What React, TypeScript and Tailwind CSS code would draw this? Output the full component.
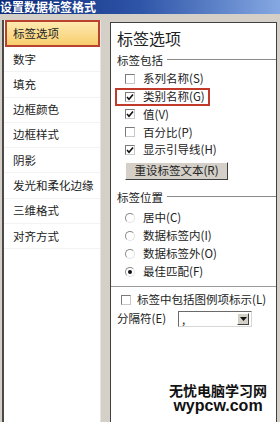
import React from "react";

const cjk = { fontFamily: '"Noto Sans CJK SC", "Noto Sans", sans-serif' };

function CheckBox({ checked }: { checked?: boolean }) {
  return (
    <div className="w-[10px] h-[10px] border border-t-[#7a7a7a] border-l-[#7a7a7a] border-r-[#c8c8c8] border-b-[#c8c8c8] bg-white flex items-center justify-center shrink-0">
      {checked && (
        <svg width="8" height="8" viewBox="0 0 8 8">
          <polyline points="1,4 3,6.2 7,1.6" fill="none" stroke="#111" strokeWidth="1.6" />
        </svg>
      )}
    </div>
  );
}

function Radio({ checked }: { checked?: boolean }) {
  return (
    <div className="w-[10px] h-[10px] rounded-full border border-t-[#8a8a8a] border-l-[#8a8a8a] border-r-[#e2e2e2] border-b-[#e2e2e2] bg-white flex items-center justify-center shrink-0">
      {checked && <div className="w-[4px] h-[4px] rounded-full bg-[#111]" />}
    </div>
  );
}

function GroupTitle({ label }: { label: string }) {
  return (
    <div className="flex items-center h-[14px] pl-[6px] gap-[4px]">
      <span className="text-[11.5px] leading-[14px] text-[#222]">{label}</span>
      <div className="flex-1 h-[2px] border-t border-[#8a8a8a] border-b border-b-white" />
    </div>
  );
}

const menu = ["数字", "填充", "边框颜色", "边框样式", "阴影", "发光和柔化边缘", "三维格式", "对齐方式"];

export default function App() {
  return (
    <div className="w-[280px] h-[422px] overflow-hidden bg-[#d4d0c8] flex flex-col" style={cjk}>
      <div className="h-[14px] shrink-0 flex items-center bg-gradient-to-r from-[#0c2a78] via-[#2f55a8] to-[#86a8e2]">
        <div className="text-[12px] leading-[14px] font-bold text-white whitespace-nowrap">
          设置数据标签格式
        </div>
      </div>

      <div className="flex flex-1 pt-[6px]">
        <div className="ml-[2px] w-[99px] bg-white border-l-2 border-[#4a4a4a] border-r border-r-[#e4e4e4]">
          <div className="ml-[1px] w-[95px] h-[27px] border-2 border-[#b9412e] bg-gradient-to-b from-[#fdeab0] to-[#f8cd6c] flex items-center pl-[6px] text-[11.5px] text-[#222]">
            标签选项
          </div>
          {menu.map((m) => (
            <div
              key={m}
              className="h-[25.3px] flex items-center pl-[9px] text-[11.5px] text-[#222] border-b border-[#f3f3f3] whitespace-nowrap"
            >
              {m}
            </div>
          ))}
        </div>

        <div className="ml-[9px] mt-[2px] w-[167px] bg-white border-l border-r border-t border-[#404040] flex flex-col">
          <div className="mt-[5px] h-[20px] pl-[6px] text-[16px] leading-[20px] text-[#222]">标签选项</div>

          <div className="mt-[5px]">
            <GroupTitle label="标签包括" />
          </div>

          <div className="mt-[3px] flex flex-col text-[11.5px] text-[#222]">
            <div className="h-[17.75px] flex items-center pl-[14px] gap-[8px]">
              <CheckBox />
              <span>系列名称(S)</span>
            </div>
            <div className="h-[17.75px] w-[95px] ml-[4px] border-2 border-[#c0392b] flex items-center pl-[8px] gap-[8px]">
              <CheckBox checked />
              <span>类别名称(G)</span>
            </div>
            <div className="h-[17.75px] flex items-center pl-[14px] gap-[8px]">
              <CheckBox checked />
              <span>值(V)</span>
            </div>
            <div className="h-[17.75px] flex items-center pl-[14px] gap-[8px]">
              <CheckBox />
              <span>百分比(P)</span>
            </div>
            <div className="h-[17.75px] flex items-center pl-[14px] gap-[8px]">
              <CheckBox checked />
              <span>显示引导线(H)</span>
            </div>
          </div>

          <div className="mt-[3px] ml-[14px] w-[103px] h-[18px] bg-[#d4d0c8] border border-t-white border-l-white border-r-[#404040] border-b-[#404040] flex items-center justify-center text-[11.5px] text-[#222]">
            重设标签文本(R)
          </div>

          <div className="mt-[10px]">
            <GroupTitle label="标签位置" />
          </div>

          <div className="mt-[5px] flex flex-col text-[11.5px] text-[#222]">
            {[
              ["居中(C)", false],
              ["数据标签内(I)", false],
              ["数据标签外(O)", false],
              ["最佳匹配(F)", true],
            ].map(([label, on]) => (
              <div key={label as string} className="h-[18px] flex items-center pl-[14px] gap-[8px]">
                <Radio checked={on as boolean} />
                <span>{label as string}</span>
              </div>
            ))}
          </div>

          <div className="mt-[5px] h-[2px] border-t border-[#9a9a9a] border-b border-b-white" />

          <div className="mt-[4px] h-[16px] flex items-center pl-[10px] gap-[6px] text-[11.5px] text-[#222]">
            <CheckBox />
            <span>标签中包括图例项标示(L)</span>
          </div>

          <div className="mt-[3px] h-[16px] flex items-center pl-[6px] text-[11.5px] text-[#222]">
            <span className="w-[61px]">分隔符(E)</span>
            <div className="w-[74px] h-[16px] bg-white border border-t-[#6a6a6a] border-l-[#6a6a6a] border-r-[#d8d8d8] border-b-[#d8d8d8] flex items-center justify-between pl-[3px] pr-[2px]">
              <span className="leading-[12px]">,</span>
              <div className="w-[12px] h-[12px] bg-[#d4d0c8] border border-t-white border-l-white border-r-[#404040] border-b-[#404040] flex items-center justify-center">
                <svg width="7" height="4" viewBox="0 0 7 4">
                  <polygon points="0,0 7,0 3.5,4" fill="#111" />
                </svg>
              </div>
            </div>
          </div>

          <div className="mt-[56px] ml-[57px] w-[100px] flex flex-col items-center text-[#111]">
            <div className="text-[14px] leading-[15px] font-bold whitespace-nowrap">无忧电脑学习网</div>
            <div
              className="text-[16px] leading-[16px] font-bold whitespace-nowrap"
              style={{ fontFamily: '"Liberation Sans", Arial, sans-serif' }}
            >
              wypcw.com
            </div>
          </div>
        </div>
      </div>
    </div>
  );
}
